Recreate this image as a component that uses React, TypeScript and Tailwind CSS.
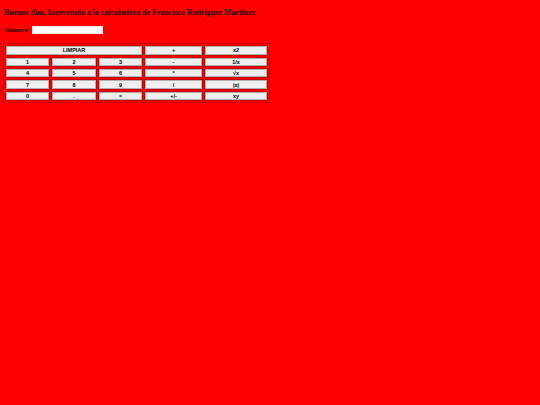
const rows: { label: string; span?: number }[][] = [
  [{ label: "LIMPIAR", span: 3 }, { label: "+" }, { label: "x2" }],
  [{ label: "1" }, { label: "2" }, { label: "3" }, { label: "-" }, { label: "1/x" }],
  [{ label: "4" }, { label: "5" }, { label: "6" }, { label: "*" }, { label: "\u221Ax" }],
  [{ label: "7" }, { label: "8" }, { label: "9" }, { label: "/" }, { label: "|x|" }],
  [{ label: "0" }, { label: "." }, { label: "=" }, { label: "+/-" }, { label: "xy" }],
];

export default function App() {
  return (
    <div className="min-h-[405px] w-full bg-[#ff0000] px-[3px] py-[1px] font-['Liberation_Serif',serif] text-[#1a0000]">
      <h3 className="mt-[7px] mb-[8px] pl-[1px] text-[7.9px] leading-[9px] font-bold">
        Buenos dias, bienvenido a la calculadora de Francisco Rodriguez Martinez
      </h3>
      <div className="flex items-center gap-[2px] pl-[1px] text-[6.8px] font-bold">
        <span>Número:</span>
        <input
          type="text"
          className="h-[8px] w-[71px] border border-[#e8e8e8] bg-white outline-none"
        />
      </div>
      <table className="mt-[8px] border-separate border-spacing-[1px] border border-[#d40000]">
        <colgroup>
          <col className="w-[45px]" />
          <col className="w-[46px]" />
          <col className="w-[45px]" />
          <col className="w-[59px]" />
          <col className="w-[64px]" />
        </colgroup>
        <tbody>
          {rows.map((row, i) => (
            <tr key={i}>
              {row.map((cell) => (
                <td key={cell.label} colSpan={cell.span} className="border border-[#c80000] p-0">
                  <button
                    type="button"
                    className="block h-[8.4px] w-full border border-[#b0b0b0] bg-[#efefef] font-['Liberation_Sans',sans-serif] text-[5.5px] leading-[6px] font-bold text-black"
                  >
                    {cell.label}
                  </button>
                </td>
              ))}
            </tr>
          ))}
        </tbody>
      </table>
    </div>
  );
}
